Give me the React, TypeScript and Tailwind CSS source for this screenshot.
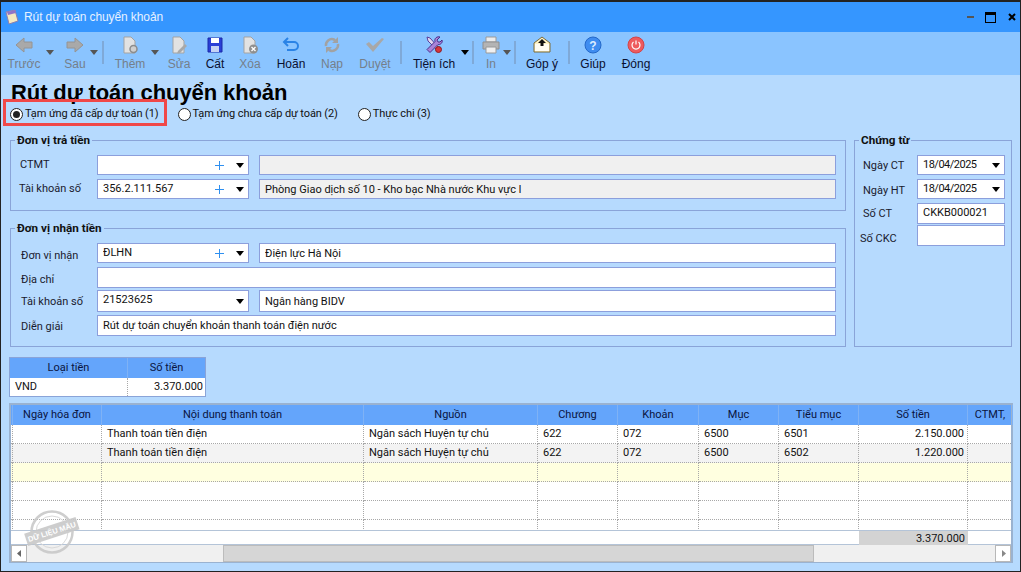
import type { ReactNode } from "react"

const uiFont = "[font-family:'Liberation_Sans',Arial,sans-serif]"
const formFont = "[font-family:Roboto,'Liberation_Sans',sans-serif]"
const gridCols = "grid grid-cols-[2px_89px_262px_174px_80px_81px_80px_80px_109px_45px]"

function Caret({ className = "" }: { className?: string }) {
  return (
    <svg width="8" height="5" viewBox="0 0 8 5" className={className}>
      <path d="M0 0h8L4 5z" fill="currentColor" />
    </svg>
  )
}

function Plus() {
  return (
    <svg width="9" height="9" viewBox="0 0 9 9" className="mr-[12px] shrink-0">
      <path d="M4.500 0v9M0 4.500h9" stroke="#2f90f0" strokeWidth="1" />
    </svg>
  )
}

const icons: Record<string, ReactNode> = {
  back: <path d="M1 9 9 2v4h8v6H9v4z" fill="#a9a9a9" stroke="#949494" />,
  next: <path d="M17 9 9 2v4H1v6h8v4z" fill="#a9a9a9" stroke="#949494" />,
  add: (
    <>
      <path d="M3 1h7l4 4v12H3z" fill="#e2e2e2" stroke="#a3a3a3" />
      <circle cx="12.500" cy="13" r="3.500" fill="#cfcfcf" stroke="#8c8c8c" strokeWidth="1.500" />
    </>
  ),
  edit: (
    <>
      <path d="M3 1h7l4 4v12H3z" fill="#e2e2e2" stroke="#a3a3a3" />
      <path d="M8 15l7-7 2 2-7 7-3 .5z" fill="#a8a8a8" />
    </>
  ),
  save: (
    <>
      <path d="M2 2h14v14H2z" fill="#2a3fd6" stroke="#1b2aa8" />
      <path d="M5 2h8v5H5z" fill="#fff" />
      <path d="M5 10h8v6H5z" fill="#c4d2f4" />
    </>
  ),
  remove: (
    <>
      <path d="M3 1h7l4 4v12H3z" fill="#e2e2e2" stroke="#a3a3a3" />
      <circle cx="12.500" cy="13" r="4.500" fill="#8f8f8f" />
      <path d="M10.500 11l4 4m0-4-4 4" stroke="#fff" strokeWidth="1.300" />
    </>
  ),
  undo: <path d="M6 2 2 6l4 4M2.500 6H12a4 4 0 0 1 0 8H5" fill="none" stroke="#2a83e6" strokeWidth="2" />,
  reload: (
    <>
      <path d="M3 10a6 6 0 0 1 8-6.500l1 1" fill="none" stroke="#a2a2a2" strokeWidth="2.500" />
      <path d="M15 8a6 6 0 0 1-8 6.500l-1-1" fill="none" stroke="#a2a2a2" strokeWidth="2.500" />
      <path d="M15 1v6H9zM3 17v-6h6z" fill="#a2a2a2" />
    </>
  ),
  check: <path d="M0 8l3-2 4 4 9-8 2 1L7 16z" fill="#a8a8a8" />,
  tools: (
    <>
      <path d="M2 1l3 1 10 11-2 2L3 5z" fill="#e0dcf2" stroke="#5a3d9c" />
      <path d="M15 1l-3 3 1 2h2l2-2c1 3-2 5-4 4.500l-8 8-3-3 8-8c-1-3 2-5.500 5-4.500z" fill="#a884d8" stroke="#4a2f8c" />
      <circle cx="13.500" cy="13.500" r="3" fill="#d8343c" stroke="#8a1c22" />
    </>
  ),
  print: (
    <>
      <path d="M4 1h10v5H4z" fill="#ececec" stroke="#9a9a9a" />
      <path d="M1 6h16v7H1z" fill="#b4b4b4" stroke="#8f8f8f" />
      <path d="M4 11h10v6H4z" fill="#f0f0f0" stroke="#9a9a9a" />
    </>
  ),
  mail: (
    <>
      <path d="M1 7l8-6 8 6v9H1z" fill="#fff3c4" stroke="#7a6a3a" />
      <path d="M2 8h14v7H2z" fill="#fffdf3" />
      <path d="M9 3l4 4h-2.500v3h-3V7H5z" fill="#111" />
    </>
  ),
  help: (
    <>
      <circle cx="9" cy="9" r="8" fill="#3f8cf0" stroke="#2468c8" />
      <text x="9" y="13.500" textAnchor="middle" fontSize="12" fontWeight="700" fill="#dcebff" fontFamily="Liberation Sans">
        ?
      </text>
    </>
  ),
  power: (
    <>
      <circle cx="9" cy="9" r="8" fill="#ee5a5e" stroke="#d24448" />
      <path d="M6.500 6a4 4 0 1 0 5 0M9 4.500v4" fill="none" stroke="#fff" strokeWidth="1.200" />
    </>
  ),
}

type ToolProps = {
  label: string
  icon: string
  width: string
  off?: boolean
  caret?: string
}

function Tool({ label, icon, width, off, caret }: ToolProps) {
  return (
    <div className={`relative flex h-full shrink-0 flex-col items-center ${width}`}>
      <svg width="18" height="18" viewBox="0 0 18 18" className="mt-[4px]">
        {icons[icon]}
      </svg>
      <span className={`mt-[3px] text-[12px] leading-[14px] whitespace-nowrap ${off ? "text-[#757f8a]" : "text-[#0a1030]"}`}>
        {label}
      </span>
      {caret && <Caret className={`absolute top-[18px] ${caret} ${off ? "text-[#555]" : "text-black"}`} />}
    </div>
  )
}

function Sep({ className = "" }: { className?: string }) {
  return <div className={`mt-[9px] h-[23px] w-[2px] shrink-0 bg-[#7fa9d8] ${className}`} />
}

function Radio({ label, checked, className = "" }: { label: string; checked?: boolean; className?: string }) {
  return (
    <label className={`flex items-center gap-[2px] text-[11px] tracking-[-0.1px] text-[#111] ${className}`}>
      <span className="flex size-[13px] items-center justify-center rounded-full border border-[#222] bg-white">
        {checked && <span className="size-[7px] rounded-full bg-[#222]" />}
      </span>
      {label}
    </label>
  )
}

function Field({
  value = "",
  width,
  height = "h-[20px]",
  disabled,
  plus,
  drop,
  className = "",
  textClass = "pt-[2px]",
}: {
  value?: string
  width: string
  height?: string
  disabled?: boolean
  plus?: boolean
  drop?: boolean
  className?: string
  textClass?: string
}) {
  return (
    <div
      className={`flex shrink-0 items-center border border-[#8c9fdc] pl-[5px] text-[11px] text-[#111] ${height} ${width} ${
        disabled ? "bg-[#f0f0f0]" : "bg-white"
      } ${className}`}
    >
      <span className={`flex-1 truncate ${textClass}`}>{value}</span>
      {plus && <Plus />}
      {drop && <Caret className="mr-[4px] shrink-0 text-black" />}
    </div>
  )
}

function Row({ label, labelClass, children, className = "" }: { label: string; labelClass: string; children: ReactNode; className?: string }) {
  return (
    <div className={`flex items-start ${className}`}>
      <span className={`shrink-0 text-[11px] leading-[14px] text-[#1a1a2e] whitespace-nowrap ${labelClass}`}>{label}</span>
      {children}
    </div>
  )
}

function Group({ title, className, children }: { title: string; className: string; children: ReactNode }) {
  return (
    <fieldset className={`border border-[#8aa4d8] ${className}`}>
      <legend className="ml-[4px] px-[2px] text-[11.7px] leading-[14px] font-bold text-[#111]">{title}</legend>
      {children}
    </fieldset>
  )
}

const cell = "border-r border-b border-dotted border-[#a8a8a8] h-[19px] px-[5px] pt-[1px] flex items-center text-[11px] text-[#111] whitespace-nowrap overflow-hidden"

const headers = ["", "Ngày hóa đơn", "Nội dung thanh toán", "Nguồn", "Chương", "Khoản", "Mục", "Tiểu mục", "Số tiền", "CTMT,"]

const rows = [
  ["", "", "Thanh toán tiền điện", "Ngân sách Huyện tự chủ", "622", "072", "6500", "6501", "2.150.000", ""],
  ["", "", "Thanh toán tiền điện", "Ngân sách Huyện tự chủ", "622", "072", "6500", "6502", "1.220.000", ""],
  ["", "", "", "", "", "", "", "", "", ""],
  ["", "", "", "", "", "", "", "", "", ""],
  ["", "", "", "", "", "", "", "", "", ""],
  ["", "", "", "", "", "", "", "", "", ""],
]

const rowBg = ["bg-white", "bg-[#f3f3f3]", "bg-[#ffffe0]", "bg-white", "bg-white", "bg-white"]

function Stamp() {
  return (
    <svg width="56" height="46" viewBox="0 0 56 46" className="absolute bottom-[6px] left-[13px] opacity-90">
      <circle cx="28" cy="23" r="20.500" fill="none" stroke="#c9c9c9" strokeWidth="2.500" />
      <circle cx="28" cy="23" r="16" fill="none" stroke="#d6d6d6" strokeWidth="1" />
      <g transform="rotate(-18 28 23)">
        <rect x="1" y="16" width="54" height="13" fill="#c8c8c8" />
        <text x="28" y="25.500" textAnchor="middle" fontSize="7.500" fontWeight="700" fill="#fff" fontFamily="Liberation Sans">
          DỮ LIỆU MẪU
        </text>
      </g>
    </svg>
  )
}

export default function App() {
  return (
    <div className={`relative flex h-[572px] w-[1021px] flex-col overflow-hidden border-x border-t-2 border-b border-[#222] bg-[#b6dafe] ${formFont}`}>
      {/* title bar */}
      <div className={`flex h-[30px] shrink-0 items-center bg-[#3596ff] pr-[4px] pl-[3px] ${uiFont}`}>
        <svg width="16" height="16" viewBox="0 0 16 16">
          <path d="M2 3l9-2 3 11-9 3z" fill="#f4e9c0" stroke="#8a7fb0" />
          <path d="M3 3l8-2 1 3-8 2z" fill="#8f74c8" />
        </svg>
        <span className="ml-[4px] text-[12px] tracking-[-0.1px] text-[#e6f1ff]">Rút dự toán chuyển khoản</span>
        <div className="ml-auto flex items-center">
          <div className="h-[2px] w-[7px] bg-[#555]" />
          <div className="ml-[11px] h-[11px] w-[11px] border border-t-[3px] border-black" />
          <span className="ml-[12px] flex size-[8px] items-center justify-center">
            <svg width="8" height="8" viewBox="0 0 8 8">
              <path d="M1 1l6 6M7 1 1 7" stroke="#000" strokeWidth="2" />
            </svg>
          </span>
        </div>
      </div>

      {/* toolbar */}
      <div className={`flex h-[43px] shrink-0 items-start bg-[#8ac4ff] ${uiFont}`}>
        <Tool label="Trước" icon="back" width="w-[46px]" off caret="right-[-7px]" />
        <Tool label="Sau" icon="next" width="w-[54px] ml-[1px]" off caret="right-[4px]" />
        <Sep />
        <Tool label="Thêm" icon="add" width="w-[52px]" off caret="right-[-3px]" />
        <Tool label="Sửa" icon="edit" width="w-[46px]" off />
        <Tool label="Cất" icon="save" width="w-[26px]" />
        <Tool label="Xóa" icon="remove" width="w-[44px]" off />
        <Tool label="Hoãn" icon="undo" width="w-[38px]" />
        <Tool label="Nạp" icon="reload" width="w-[44px]" off />
        <Tool label="Duyệt" icon="check" width="w-[42px]" off />
        <Sep className="ml-[4px]" />
        <Tool label="Tiện ích" icon="tools" width="w-[64px]" caret="right-[-3px]" />
        <Sep className="ml-[6px]" />
        <Tool label="In" icon="print" width="w-[34px]" off caret="right-[-3px]" />
        <Sep className="ml-[6px]" />
        <Tool label="Góp ý" icon="mail" width="w-[52px]" />
        <Sep />
        <Tool label="Giúp" icon="help" width="w-[46px]" />
        <Tool label="Đóng" icon="power" width="w-[40px]" />
      </div>

      {/* body */}
      <div className="relative flex min-h-0 flex-1 flex-col pl-[8px]">
        <h1 className={`mt-[5px] ml-[2px] text-[22px] leading-[26px] font-bold tracking-[-0.1px] text-black ${uiFont}`}>Rút dự toán chuyển khoản</h1>
        <div className="mt-[-1px] flex h-[18px] items-center pl-[1px]">
          <Radio label="Tạm ứng đã cấp dự toán (1)" checked />
          <Radio label="Tạm ứng chưa cấp dự toán (2)" className="ml-[19px]" />
          <Radio label="Thực chi (3)" className="ml-[20px]" />
        </div>

        <div className="mt-[10px] flex items-start">
          <div className="w-[837px] shrink-0 pl-[1px]">
            <Group title="Đơn vị trả tiền" className="h-[78px] w-[836px]">
              <Row label="CTMT" labelClass="w-[86px] pl-[9px] pt-[3px]" className="mt-[8px]">
                <Field width="w-[152px]" plus drop />
                <Field width="w-[577px] ml-[10px]" disabled />
              </Row>
              <Row label="Tài khoản số" labelClass="w-[86px] pl-[8px] pt-[3px]" className="mt-[4px]">
                <Field value="356.2.111.567" width="w-[152px]" plus drop textClass="" />
                <Field value="Phòng Giao dịch số 10 - Kho bạc Nhà nước Khu vực I" width="w-[577px] ml-[10px]" disabled />
              </Row>
            </Group>
            <Group title="Đơn vị nhận tiền" className="mt-[10px] h-[126px] w-[836px]">
              <Row label="Đơn vị nhận" labelClass="w-[86px] pl-[10px] pt-[6px]" className="mt-[8px]">
                <Field value="ĐLHN" width="w-[152px]" plus drop textClass="" />
                <Field value="Điện lực Hà Nội" width="w-[577px] ml-[10px]" />
              </Row>
              <Row label="Địa chỉ" labelClass="w-[86px] pl-[10px] pt-[6px]" className="mt-[4px]">
                <Field width="w-[739px]" height="h-[21px]" />
              </Row>
              <Row label="Tài khoản số" labelClass="w-[86px] pl-[10px] pt-[5px]" className="mt-[2px]">
                <Field value="21523625" width="w-[152px]" height="h-[22px]" drop textClass="pb-[2px]" />
                <Field value="Ngân hàng BIDV" width="w-[577px] ml-[10px]" height="h-[22px]" />
              </Row>
              <Row label="Diễn giải" labelClass="w-[86px] pl-[10px] pt-[5px]" className="mt-[3px]">
                <Field value="Rút dự toán chuyển khoản thanh toán điện nước" width="w-[739px]" height="h-[21px]" />
              </Row>
            </Group>
          </div>

          <Group title="Chứng từ" className="ml-[8px] h-[214px] w-[158px]">
            <Row label="Ngày CT" labelClass="w-[62px] pl-[8px] pt-[4px]" className="mt-[8px]">
              <Field value="18/04/2025" width="w-[88px]" drop textClass="tracking-[-0.5px]" />
            </Row>
            <Row label="Ngày HT" labelClass="w-[62px] pl-[8px] pt-[5px]" className="mt-[4px]">
              <Field value="18/04/2025" width="w-[88px]" drop textClass="tracking-[-0.5px]" />
            </Row>
            <Row label="Số CT" labelClass="w-[62px] pl-[8px] pt-[4px]" className="mt-[4px]">
              <Field value="CKKB000021" width="w-[88px]" height="h-[21px]" textClass="" />
            </Row>
            <Row label="Số CKC" labelClass="w-[62px] pl-[5px] pt-[7px]" className="mt-[1px]">
              <Field width="w-[88px]" height="h-[21px]" />
            </Row>
          </Group>
        </div>

        {/* currency grid */}
        <div className="mt-[10px] w-[197px] border border-[#8aa4d8] bg-white text-[11px]">
          <div className="grid h-[20px] grid-cols-[118px_77px] bg-[#64a5fb] text-[#0a1440]">
            <span className="flex items-center justify-center border-r border-[#7fb2f5]">Loại tiền</span>
            <span className="flex items-center justify-center">Số tiền</span>
          </div>
          <div className="grid h-[18px] grid-cols-[118px_77px] text-[#111]">
            <span className="flex items-center border-r border-dotted border-[#a8a8a8] pl-[5px]">VND</span>
            <span className="flex items-center justify-end pr-[2px]">3.370.000</span>
          </div>
        </div>

        {/* detail grid */}
        <div className="relative mt-[6px] flex h-[160px] w-[1004px] flex-col border-2 border-[#9ab2d0] bg-white">
          <div className={`${gridCols} h-[20px] shrink-0 bg-[#64a5fb] text-[11px] text-[#0a1440]`}>
            {headers.map((h, i) => (
              <span key={i} className="flex items-center justify-center overflow-hidden border-r border-[#7fb2f5] whitespace-nowrap">
                {h}
              </span>
            ))}
          </div>
          <div className="h-[105px] shrink-0 overflow-hidden">
            {rows.map((row, r) => (
              <div key={r} className={`${gridCols} ${rowBg[r]}`}>
                {row.map((v, c) => (
                  <span key={c} className={`${cell} ${c === 8 ? "justify-end !pr-[3px]" : ""} ${c === 0 ? "!px-0" : ""}`}>
                    {v}
                  </span>
                ))}
              </div>
            ))}
          </div>
          <div className={`${gridCols} h-[15px] shrink-0 border-y border-[#b4c4d8]`}>
            <span className="col-span-8" />
            <span className="flex items-center justify-end bg-[#d3d3d3] pr-[3px] text-[11px] text-[#111]">3.370.000</span>
          </div>
          <div className="flex h-[17px] shrink-0 items-center bg-[#f0f0f0]">
            <div className="flex h-full w-[16px] shrink-0 items-center justify-center border border-[#b8b8b8] bg-white">
              <svg width="5" height="7" viewBox="0 0 5 7">
                <path d="M4 0v7L0 3.500z" fill="#666" />
              </svg>
            </div>
            <div className="ml-[196px] h-full w-[591px] shrink-0 border border-[#bcbcbc] bg-[#d6d6d6]" />
            <div className="ml-auto flex h-full w-[16px] shrink-0 items-center justify-center border border-[#b8b8b8] bg-white">
              <svg width="5" height="7" viewBox="0 0 5 7">
                <path d="M1 0v7l4-3.500z" fill="#888" />
              </svg>
            </div>
          </div>
          <Stamp />
        </div>

        {/* highlight around the first option */}
        <div className="absolute top-[24px] left-[2px] h-[27px] w-[164px] border-[3px] border-[#f04848]" />
      </div>
    </div>
  )
}
